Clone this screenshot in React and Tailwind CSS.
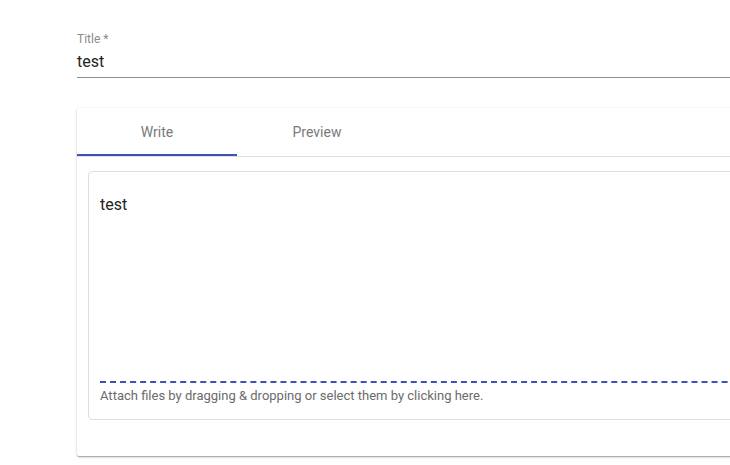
import React from "react";

export default function App() {
  return (
    <div className="w-[730px] h-[465px] overflow-hidden bg-white" style={{ fontFamily: "Roboto, 'Liberation Sans', sans-serif" }}>
      <div className="w-[900px] pl-[77px] pt-[32px]">
        <div className="flex flex-col">
          <label className="text-[12px] leading-[14px] text-[#8a8a8a]">Title *</label>
          <div className="mt-[4px] border-b border-[#8f8f8f] pb-[3px]">
            <div className="text-[16px] leading-[24px] text-[#222]">test</div>
          </div>
        </div>

        <div className="mt-[30px] bg-white rounded-[2px] shadow-[0_1px_3px_0_rgba(0,0,0,0.2),0_1px_1px_0_rgba(0,0,0,0.14),0_2px_1px_-1px_rgba(0,0,0,0.12)]">
          <div className="flex h-[49px] border-b border-[#e0e0e0]">
            <div className="relative w-[160px] flex items-center justify-center text-[14px] text-[#7a7a7a]">
              Write
              <div className="absolute left-0 right-0 bottom-0 h-[2px] bg-[#3f51b5]" />
            </div>
            <div className="w-[160px] flex items-center justify-center text-[14px] text-[#7a7a7a]">
              Preview
            </div>
          </div>

          <div className="pl-[11px] pt-[14px] pb-[36px]">
            <div className="rounded-[4px] border border-[#dedede] px-[11px] pb-[15px]">
              <div className="h-[209px] pt-[21px] text-[16px] leading-[24px] text-[#222]">test</div>
              <div className="border-t-2 border-dashed border-[#3f51b5]" />
              <div className="mt-[5px] text-[13px] leading-[16px] text-[#6b6b6b]">
                Attach files by dragging &amp; dropping or select them by clicking here.
              </div>
            </div>
          </div>
        </div>
      </div>
    </div>
  );
}
